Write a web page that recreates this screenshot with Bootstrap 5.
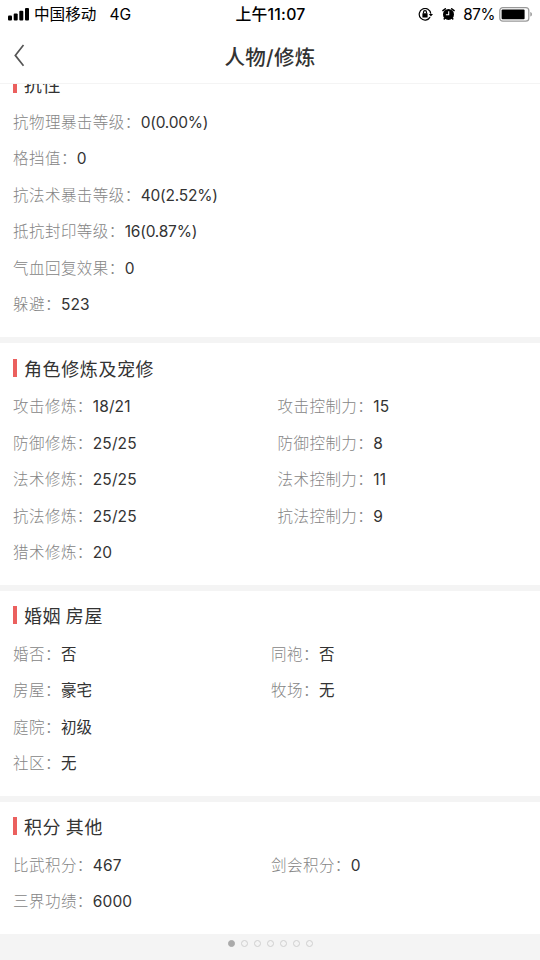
<!DOCTYPE html>
<html lang="zh-CN">
<head>
<meta charset="utf-8">
<meta name="viewport" content="width=device-width, initial-scale=1">
<title>人物/修炼</title>
<link href="https://cdn.jsdelivr.net/npm/bootstrap@5.3.0/dist/css/bootstrap.min.css" rel="stylesheet">
<style>
body{width:540px;height:960px;overflow:hidden;background:#f4f4f4;color:#333;font-family:Inter,"Noto Sans CJK SC",sans-serif}
.status{height:28px;display:grid;grid-template-columns:1fr auto 1fr;color:#000;font-size:15.6px;line-height:28px;padding:1px 7px 0 8px}
.status .clock{font-weight:500;font-size:15.8px;letter-spacing:.25px}
.status .network{margin-left:13px}
.status .charge{font-size:15.2px;letter-spacing:-.4px}
.titlebar{height:56px;border-bottom:1px solid #f4f4f4;display:grid;grid-template-columns:1fr auto 1fr;align-items:center}
.titlebar h1{font-size:20.5px;font-weight:500;line-height:51px;padding-top:4px;letter-spacing:.3px}
.back{width:12px;height:24px;margin-left:13px}
.scroller{height:850px;overflow:hidden}
.panel{background:#fff;padding:0 13px 14.75px;margin-bottom:6px}
.panel-first{margin-top:-25px;margin-bottom:6.25px}
.heading{height:44.25px;padding-top:15.5px;font-size:18px;letter-spacing:.6px;word-spacing:-1px;line-height:18px;font-weight:400}
.heading::before{content:"";width:4px;height:18px;background:#eb605e;margin-right:7px}
.heading span{line-height:18px;padding-top:2px}
.entry{height:36.5px;line-height:35.5px;padding-top:1.5px;font-size:15.5px;letter-spacing:.46px;white-space:nowrap}
.entry dt{font-weight:300;color:#858585}
.entry dd{margin:0;font-weight:400;letter-spacing:.1px}
.entry .rate{letter-spacing:-.22px}
.wide{width:264.5px}
.half{width:258px}
.dots{height:18px;gap:6px}
.dots i{width:7px;height:7px;border:1px solid #cfcfcf;border-radius:50%}
.dots .on{background:#aaa;border-color:#aaa}
</style>
<script src="https://cdn.jsdelivr.net/npm/bootstrap@5.3.0/dist/js/bootstrap.bundle.min.js"></script>
</head>
<body>
<header class="bg-white">
<div class="status">
  <div class="d-flex align-items-center">
    <svg width="22" height="14" viewBox="0 0 22 14"><rect x="0" y="7.5" width="4" height="5" rx="1"/><rect x="5.7" y="5.5" width="4" height="7" rx="1"/><rect x="11.3" y="2.8" width="4" height="9.7" rx="1"/><rect x="17" y="0" width="4" height="12.5" rx="1"/></svg>
    <span class="ms-1">中国移动</span><span class="network">4G</span>
  </div>
  <div class="clock">上午11:07</div>
  <div class="d-flex align-items-center justify-content-end">
    <svg width="16" height="14" viewBox="0 0 16 14" fill="none" stroke="#000" stroke-width="1.2"><path d="M12.1 9.1A5.8 5.8 0 1 1 12.8 5.7"/><path d="M10.8 5.9h4.2l-2.1 2.7z" fill="#000" stroke="none"/><rect x="4.4" y="5.3" width="5.2" height="4.1" rx=".5" fill="#000" stroke="none"/><path d="M5.5 5.6V4.2a1.5 1.5 0 0 1 3 0v1.4"/></svg>
    <svg class="ms-2" width="13" height="14" viewBox="0 0 13 14"><circle cx="6.5" cy="6.4" r="5.5"/><path d="M.9 2.6 3.3.8M12.1 2.6 9.7.8" stroke="#000" stroke-width="1.5" stroke-linecap="round"/><path d="M2.9 9.9 1.8 11.5M10.1 9.9l1.1 1.6" stroke="#000" stroke-width="1.4"/><path d="M6.7 3.2v3.5H3.9" fill="none" stroke="#fff" stroke-width="1.1"/></svg>
    <span class="charge ms-2">87%</span>
    <svg class="ms-1" width="34" height="16" viewBox="0 0 34 16"><rect x=".8" y=".6" width="29" height="13.6" rx="3" fill="none" stroke="#999" stroke-width="1.2"/><rect x="2.6" y="2.6" width="23" height="9.6" rx="1" fill="#000"/><path d="M31.3 5c2.2.7 2.2 3.9 0 4.6z" fill="#999"/></svg>
  </div>
</div>
<div class="titlebar">
  <svg class="back" viewBox="0 0 12 24"><path d="M10.5 1 2.3 11.4l8.2 10.4" fill="none" stroke="#555" stroke-width="1.7"/></svg>
  <h1 class="m-0">人物/修炼</h1><span></span>
</div>
</header>
<main class="scroller">
<section class="panel panel-first">
  <h2 class="heading d-flex m-0"><span>抗性</span></h2>
  <dl class="m-0">
  <div class="entry d-flex"><dt>抗物理暴击等级：</dt><dd class="rate">0(0.00%)</dd></div>
  <div class="entry d-flex"><dt>格挡值：</dt><dd>0</dd></div>
  <div class="entry d-flex"><dt>抗法术暴击等级：</dt><dd class="rate">40(2.52%)</dd></div>
  <div class="entry d-flex"><dt>抵抗封印等级：</dt><dd class="rate">16(0.87%)</dd></div>
  <div class="entry d-flex"><dt>气血回复效果：</dt><dd>0</dd></div>
  <div class="entry d-flex"><dt>躲避：</dt><dd>523</dd></div>
  </dl>
</section>
<section class="panel">
  <h2 class="heading d-flex m-0"><span>角色修炼及宠修</span></h2>
  <div class="d-flex">
  <dl class="wide m-0">
  <div class="entry d-flex"><dt>攻击修炼：</dt><dd>18/21</dd></div>
  <div class="entry d-flex"><dt>防御修炼：</dt><dd>25/25</dd></div>
  <div class="entry d-flex"><dt>法术修炼：</dt><dd>25/25</dd></div>
  <div class="entry d-flex"><dt>抗法修炼：</dt><dd>25/25</dd></div>
  <div class="entry d-flex"><dt>猎术修炼：</dt><dd>20</dd></div>
  </dl>
  <dl class="m-0">
  <div class="entry d-flex"><dt>攻击控制力：</dt><dd>15</dd></div>
  <div class="entry d-flex"><dt>防御控制力：</dt><dd>8</dd></div>
  <div class="entry d-flex"><dt>法术控制力：</dt><dd>11</dd></div>
  <div class="entry d-flex"><dt>抗法控制力：</dt><dd>9</dd></div>
  </dl>
  </div>
</section>
<section class="panel">
  <h2 class="heading d-flex m-0"><span>婚姻 房屋</span></h2>
  <div class="d-flex">
  <dl class="half m-0">
  <div class="entry d-flex"><dt>婚否：</dt><dd>否</dd></div>
  <div class="entry d-flex"><dt>房屋：</dt><dd>豪宅</dd></div>
  <div class="entry d-flex"><dt>庭院：</dt><dd>初级</dd></div>
  <div class="entry d-flex"><dt>社区：</dt><dd>无</dd></div>
  </dl>
  <dl class="m-0">
  <div class="entry d-flex"><dt>同袍：</dt><dd>否</dd></div>
  <div class="entry d-flex"><dt>牧场：</dt><dd>无</dd></div>
  </dl>
  </div>
</section>
<section class="panel mb-0">
  <h2 class="heading d-flex m-0"><span>积分 其他</span></h2>
  <div class="d-flex">
  <dl class="half m-0">
  <div class="entry d-flex"><dt>比武积分：</dt><dd>467</dd></div>
  <div class="entry d-flex"><dt>三界功绩：</dt><dd>6000</dd></div>
  </dl>
  <dl class="m-0">
  <div class="entry d-flex"><dt>剑会积分：</dt><dd>0</dd></div>
  </dl>
  </div>
</section>
</main>
<footer class="dots d-flex justify-content-center align-items-center"><i class="on"></i><i></i><i></i><i></i><i></i><i></i><i></i></footer>
</body>
</html>
